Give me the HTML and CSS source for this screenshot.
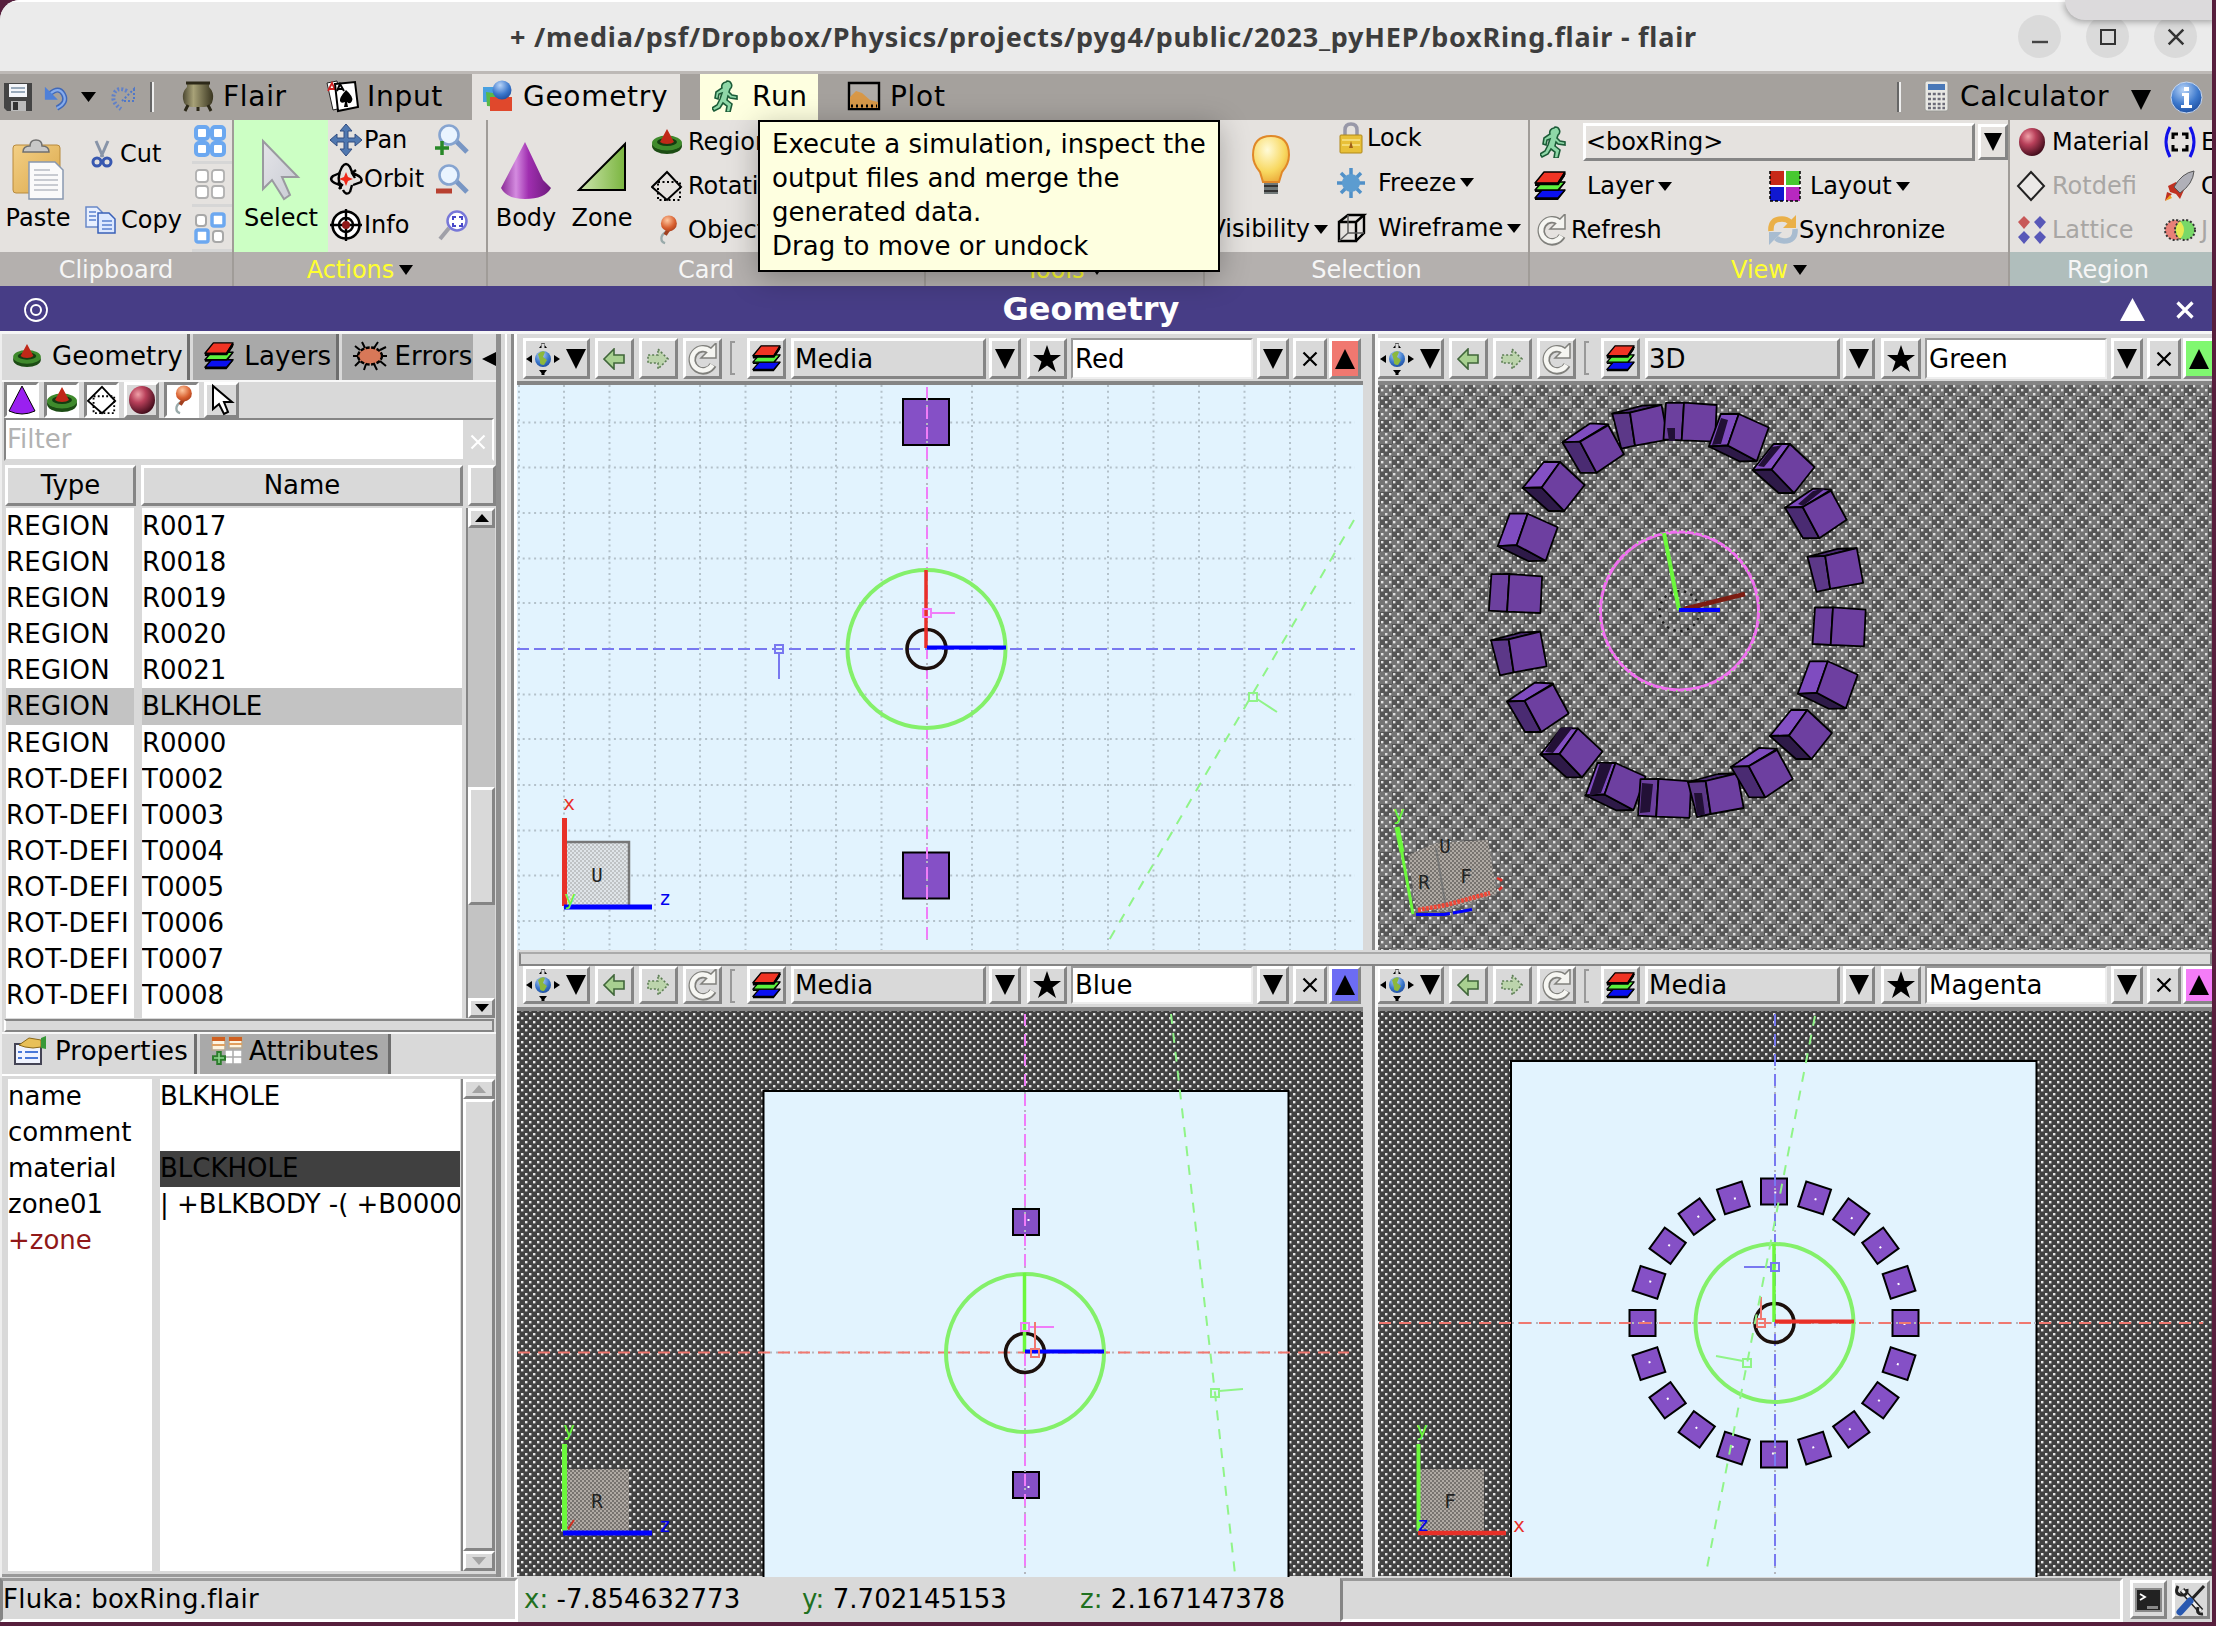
FILE: index.html
```html
<!DOCTYPE html>
<html lang="en">
<head>
<meta charset="utf-8">
<title>boxRing.flair - flair</title>
<link rel="stylesheet" href="styles.css">
</head>
<body>
<svg class="defs" width="0" height="0" aria-hidden="true">
  <defs>
    <linearGradient id="gPaste" x1="0" y1="0" x2="1" y2="1"><stop offset="0" stop-color="#f3cf85"/><stop offset="1" stop-color="#dba94c"/></linearGradient>
    <linearGradient id="gCone" x1="0" x2="1"><stop offset="0" stop-color="#8a2a96"/><stop offset=".3" stop-color="#d48be0"/><stop offset=".55" stop-color="#a02fb0"/><stop offset="1" stop-color="#6d1a7c"/></linearGradient>
    <linearGradient id="gZone" x1="0" x2="1"><stop offset="0" stop-color="#cfe6b0"/><stop offset="1" stop-color="#7ab53f"/></linearGradient>
    <linearGradient id="gArrow" x1="0" x2="1" y2="1"><stop offset="0" stop-color="#e4e4e8"/><stop offset="1" stop-color="#c9ccd4"/></linearGradient>
    <radialGradient id="gBall" cx=".35" cy=".3" r=".75"><stop offset="0" stop-color="#f0a0a8"/><stop offset=".4" stop-color="#b8405a"/><stop offset="1" stop-color="#3c0a18"/></radialGradient>
    <radialGradient id="gBulb" cx=".4" cy=".3" r=".8"><stop offset="0" stop-color="#fffbd8"/><stop offset=".6" stop-color="#f8d860"/><stop offset="1" stop-color="#e8a030"/></radialGradient>
    <radialGradient id="gBlue" cx=".4" cy=".25" r=".8"><stop offset="0" stop-color="#b8d4f8"/><stop offset=".6" stop-color="#3c78cc"/><stop offset="1" stop-color="#1c4c9c"/></radialGradient>
    <radialGradient id="gPin" cx=".4" cy=".3" r=".8"><stop offset="0" stop-color="#ffc8a0"/><stop offset=".6" stop-color="#d86030"/><stop offset="1" stop-color="#a03818"/></radialGradient>
    <linearGradient id="gPot" x1="0" x2="1"><stop offset="0" stop-color="#4c4832"/><stop offset=".35" stop-color="#a8a278"/><stop offset="1" stop-color="#38341f"/></linearGradient>

    <pattern id="dots" width="8" height="8" patternUnits="userSpaceOnUse"><rect width="8" height="8" fill="#424242"/><rect x="1" y="1" width="2.400" height="2.400" fill="#e8e8e8"/><rect x="5" y="5" width="2.400" height="2.400" fill="#e8e8e8"/></pattern>
    <pattern id="checks" width="24" height="24" patternUnits="userSpaceOnUse"><rect width="24" height="24" fill="#747474"/><rect width="12" height="12" fill="#565656"/><rect x="12" y="12" width="12" height="12" fill="#565656"/></pattern>
    <pattern id="specks" width="8" height="8" patternUnits="userSpaceOnUse"><rect x="1" y="1" width="2.400" height="2.400" fill="#e0e0e0"/><rect x="5" y="5" width="2.400" height="2.400" fill="#e0e0e0"/></pattern>
    <pattern id="mesh" width="4" height="4" patternUnits="userSpaceOnUse"><rect width="4" height="4" fill="#b0aaa4"/><rect width="2" height="2" fill="#77736f"/><rect x="2" y="2" width="2" height="2" fill="#77736f"/></pattern>
    <pattern id="meshLight" width="4" height="4" patternUnits="userSpaceOnUse"><rect width="4" height="4" fill="#dfe4e8"/><rect width="2" height="2" fill="#bfc2c4"/><rect x="2" y="2" width="2" height="2" fill="#bfc2c4"/></pattern>

    <symbol id="layers" viewBox="0 0 32 32"><path d="M1 28v2h23l7-9v-2l-7 9zM1 20v2h23l7-9v-2l-7 9zM1 13v3h23l7-10V3l-7 10z" fill="#000"/><g stroke="#000" stroke-width="1.500" stroke-linejoin="round"><path d="M8 20h23l-7 8H1z" fill="#0a10f0"/><path d="M8 12h23l-7 8H1z" fill="#5cf03c"/><path d="M10 2h21l-7 11H1z" fill="#f03424"/></g><path d="M1 14h23l7-11" fill="none" stroke="#000" stroke-width="2.400"/></symbol>
    <symbol id="runner" viewBox="0 0 28 32"><path d="M15 1a4.500 4.500 0 0 1 3 8l-1 3 3 3 5 1v3l-7-1-2-2-1 4 5 4-2 8h-4l1-6-4-3-3 5-6 3-2-3 5-3 3-6 2-6-3 1-1 5-3-1 1-6 6-4a4.500 4.500 0 0 1 4-6z" fill="#8fd8a8" stroke="#1c5c38" stroke-width="1.600"/></symbol>
    <symbol id="region" viewBox="0 0 32 26"><ellipse cx="16" cy="17" rx="15" ry="8" fill="#1c4c14"/><ellipse cx="16" cy="14" rx="15" ry="7.500" fill="#3f8a2c"/><ellipse cx="16" cy="13" rx="10" ry="4" fill="#143c10"/><path d="M16 0 23 13a8 4 0 0 1-14 0z" fill="#c02818"/></symbol>
    <symbol id="rotdef" viewBox="0 0 32 32"><path d="M16 2 30 17 16 30 1 17z" fill="none" stroke="#000" stroke-width="2"/><path d="M7 12h22v18H7z" fill="none" stroke="#000" stroke-width="2" stroke-dasharray="2 2.500"/></symbol>
    <symbol id="ball" viewBox="0 0 28 30"><ellipse cx="14" cy="15" rx="13" ry="14" fill="url(#gBall)"/></symbol>
    <symbol id="pin" viewBox="0 0 22 32"><path d="M10 18q-5 3-5 7 0 4 4 5" fill="none" stroke="#9aa" stroke-width="2.500"/><path d="M13 15 9 21" stroke="#a04020" stroke-width="4"/><circle cx="13" cy="9" r="8.500" fill="url(#gPin)"/></symbol>
    <symbol id="undo" viewBox="0 0 28 30"><path d="M7 12q10-9 15 0t-7 15" fill="none" stroke="#4068b8" stroke-width="5.500"/><path d="M7 12q10-9 15 0t-7 15" fill="none" stroke="#86acec" stroke-width="2.500"/><path d="M2 4v14h14z" fill="#4f80d8"/></symbol>
    <symbol id="refresh" viewBox="0 0 32 32"><path d="M25 9A11 11 0 1 0 27 22" fill="none" stroke="#80807c" stroke-width="7.500"/><path d="M30 0v15H15z" fill="#f4f4f0" stroke="#80807c" stroke-width="1.500"/><path d="M24 8A11 11 0 1 0 26.500 22" fill="none" stroke="#f6f6f2" stroke-width="4.500"/></symbol>
    <symbol id="globe" viewBox="0 0 34 34"><circle cx="17" cy="17" r="8" fill="url(#gBlue)"/><path d="M12 12q4-4 7-2l-2 5 4 3-3 5q-5 0-4-4z" fill="#8cb83c"/><path d="M13 6h8l-4-5zM13 28h8l-4 5zM6 13v8l-6-4zM28 13v8l6-4zM15.500 1h3v5h-3zM15.500 28h3v5h-3z" fill="#000"/></symbol>
    <symbol id="back" viewBox="0 0 22 22"><path d="M1 11 11 1v6h10v8H11v6z" fill="#a8d090" stroke="#40663a" stroke-width="1.600"/></symbol>
    <symbol id="fwd" viewBox="0 0 22 22"><path d="M21 11 11 1v6H1v8h10v6z" fill="#bcd4ac" stroke="#5c7c54" stroke-width="1.600" stroke-dasharray="2 2"/></symbol>
    <symbol id="star" viewBox="0 0 28 28"><path d="m14 0 3.500 10H28l-8.500 6.500L23 27l-9-6.500L5 27l3.500-10.500L0 10h10.500z"/></symbol>
    <symbol id="down" viewBox="0 0 20 20"><path d="M0 0h20L10 20z"/></symbol>
    <symbol id="up" viewBox="0 0 20 20"><path d="M0 20h20L10 0z"/></symbol>
    <symbol id="cross" viewBox="0 0 16 16"><path d="m1.500 1.500 13 13m0-13-13 13" stroke="currentColor" stroke-width="2.200"/></symbol>
    <symbol id="four" viewBox="0 0 32 32"><rect x="2" y="2" width="12" height="12" rx="3"/><rect x="18" y="2" width="12" height="12" rx="3"/><rect x="2" y="18" width="12" height="12" rx="3"/><rect x="18" y="18" width="12" height="12" rx="3"/></symbol>
    <symbol id="lens" viewBox="0 0 32 32"><path d="m20 17 11 11" stroke="#7896c4" stroke-width="5"/><circle cx="13" cy="11" r="9.500" fill="#eaf4ff" stroke="#86a4d0" stroke-width="2.600"/></symbol>

    <g id="cubeA" stroke="#000" stroke-width="1.800" stroke-linejoin="round"><path d="M-34-19.500-16-19.700-18.300 18-36.500 17z" fill="#6c409e"/><path d="M-16-19.700 16.700-17.300 15 19.300-18.300 18z" fill="#6d3fa0"/></g>
    <g id="cubeB" stroke="#000" stroke-width="1.800" stroke-linejoin="round"><path d="M-27-23h18L-20 8.500-39 9.500z" fill="#7f4cc0"/><path d="M-39 9.500-20 8.500 9 24-8 24.500z" fill="#2e1a48"/><path d="M-9-23 21-9.500 9 24-20 8.500z" fill="#6d3fa0"/></g>
    <g id="cubeC" stroke="#000" stroke-width="1.800" stroke-linejoin="round"><path d="M-19-24h16.300L-21 1.500-40 2z" fill="#8450c4"/><path d="M-40 2-21 1.500 1.500 25-14 25z" fill="#2e1a48"/><path d="M-2.700-24 22-1 1.500 25-21 1.500z" fill="#6d3fa0"/></g>
    <g id="cubeD" stroke="#000" stroke-width="1.800" stroke-linejoin="round"><path d="M-12-25 6-24-22.300-6.700-40-6z" fill="#7f4cc0"/><path d="M-40-6-22.300-6.700-5.700 24.500-22 24.500z" fill="#4a2b72"/><path d="M6-23 21.700 6-5.700 24.500-22.300-6.700z" fill="#6d3fa0"/></g>
    <g id="cubeE" stroke="#000" stroke-width="1.800" stroke-linejoin="round"><path d="M-36-12-6-20l19-.7-31.300 7.700z" fill="#4a2b72"/><path d="M-36-12l17.700-1L-13.300 20-27 23z" fill="#5c3888"/><path d="M-18.300-13 13.300-20.700 19.700 14-13.300 20z" fill="#6d3fa0"/></g>
    <rect id="box" x="-13" y="-13" width="26" height="26" fill="#8550c6" stroke="#000" stroke-width="2"/>
  </defs>
</svg>

<div class="window">
  <header class="titlebar">
    <h1>+ /media/psf/Dropbox/Physics/projects/pyg4/public/2023_pyHEP/boxRing.flair - flair</h1>
    <div class="winbtns">
      <span><svg width="18" height="18"><path d="M1 14h16" stroke="#444" stroke-width="2.400"/></svg></span>
      <span><svg width="18" height="18"><path d="M2 2h14v14H2z" fill="none" stroke="#333" stroke-width="2"/></svg></span>
      <span><svg width="18" height="18"><use href="#cross"/></svg></span>
    </div>
  </header>

  <nav class="menu">
    <svg class="m-save" width="30" height="30"><path d="M1 1h28v28H4l-3-3z" fill="#444"/><path d="M6 2h18v13H6z" fill="#f4f6fa"/><path d="M8 6h14M8 10h14" stroke="#9ab" stroke-width="2"/><path d="M8 19h15v10H8z" fill="#bbb"/><path d="M10 20h5v8h-5z" fill="#333"/></svg>
    <svg class="m-undo" width="26" height="28"><use href="#undo"/></svg>
    <svg class="m-drop" width="15" height="10" preserveAspectRatio="none"><path d="M0 0h15L7.500 10z"/></svg>
    <svg class="m-redo" width="27" height="28"><path d="M18 8Q8 3 5 11t7 15" fill="none" stroke="#6080c8" stroke-width="4" stroke-dasharray="2 2"/><path d="M25 6v12H13z" fill="none" stroke="#5078c8" stroke-width="2" stroke-dasharray="2 2"/></svg>
    <i class="vsep"></i>
    <a class="tab t-flair"><svg width="34" height="32"><path d="M6 3h22v4q5 5 4 12-1 8-9 8H11q-8 0-9-8Q1 12 6 7z" fill="url(#gPot)"/><path d="M5 3h24M7 25l-3 6M27 25l3 6M17 27v4" stroke="#2c2818" stroke-width="3"/></svg>Flair</a>
    <a class="tab t-input"><svg width="34" height="32"><path d="M2 3 12 1l5 27-9 2z" fill="#fff" stroke="#222"/><path d="m3 11 4-8 3 7M4 9h5" stroke="#d02020" stroke-width="1.800" fill="none"/><path d="m10 4 20-2 3 25-20 4z" fill="#fff" stroke="#000" stroke-width="2"/><path d="m12 11 3-7 4 7M13 9h5" stroke="#000" stroke-width="2" fill="none"/><path d="M21 10q8 7 6 11t-5 1l1 5h-4l1-5q-4 2-5-1t6-11z"/></svg>Input</a>
    <a class="tab t-geo"><svg width="32" height="32"><path d="M1 7h12v15H1z" fill="#48a0e0"/><path d="m4 12 14 2v13L5 26z" fill="#58b848"/><path d="M8 17h22v14H8z" fill="#e0482c"/><circle cx="20" cy="10" r="9.500" fill="url(#gBlue)"/></svg>Geometry</a>
    <a class="tab t-run"><svg width="28" height="32"><use href="#runner"/></svg>Run</a>
    <a class="tab t-plot"><svg width="34" height="30"><path d="M2 2h30v26H2z" fill="#b0aca8" stroke="#000" stroke-width="2.400"/><path d="M3 16 9 10l6 2 8 7 8 2v6H3z" fill="#d89848"/><path d="M4 25h26" stroke="#000" stroke-width="3" stroke-dasharray="2 3"/></svg>Plot</a>
    <i class="vsep v2"></i>
    <a class="tab t-calc"><svg width="25" height="32"><rect x="1" y="1" width="23" height="30" rx="2" fill="#e8e8e4" stroke="#9a9a96"/><path d="M4 4h17v6H4z" fill="#4878b8"/><path d="M4 14h17M4 19h17M4 24h17M4 28h17" stroke="#6b6b78" stroke-width="2.600" stroke-dasharray="3 1.800"/></svg>Calculator<svg class="calc-drop" width="20" height="20"><use href="#down"/></svg></a>
    <svg class="m-info" width="33" height="33"><circle cx="16.500" cy="16.500" r="15.500" fill="url(#gBlue)" stroke="#c8d8f0"/><path d="M14 6h5v4h-5zM12 12h7v12h3v3H11v-3h3v-9h-2z" fill="#fff"/></svg>
  </nav>

  <div class="ribbon">
    <section class="group g-clip">
      <div class="gbody">
        <div class="big b-paste"><svg width="52" height="60"><rect x="1" y="5" width="47" height="48" rx="3" fill="url(#gPaste)" stroke="#b88a3c"/><path d="M11 12q0-6 7-6 0-6 6-6t6 6q7 0 7 6z" fill="#c8c8c8" stroke="#707070" stroke-width="1.500"/><path d="M17 22h26l8 8v29H17z" fill="#fafafa" stroke="#8898b0" stroke-width="1.500"/><path d="M22 30h16M22 35h24M22 40h24M22 45h24M22 50h24" stroke="#b8bcc4" stroke-width="1.500"/></svg>Paste</div>
        <div class="col c-cut">
          <div class="row"><svg width="20" height="28"><path d="m4 1 7 16m5-16-7 16" stroke="#8894a8" stroke-width="3"/><circle cx="5" cy="22" r="4" fill="none" stroke="#3858b0" stroke-width="3"/><circle cx="15" cy="22" r="4" fill="none" stroke="#3858b0" stroke-width="3"/></svg><span>Cut</span></div>
          <div class="row"><svg width="32" height="28"><path d="M1 1h11l5 5v15H1z" fill="#e8f0ff" stroke="#6888c8" stroke-width="1.500"/><path d="M13 7h11l6 6v14H13z" fill="#dce8ff" stroke="#3860b8" stroke-width="1.500"/><path d="M4 6h7M4 10h7M4 14h7M17 15h10M17 19h10M17 23h10" stroke="#5880d0" stroke-width="1.600"/></svg><span>Copy</span></div>
        </div>
        <div class="col c-sel">
          <div class="row"><svg width="32" height="32" fill="#fff" stroke="#6ca8f0" stroke-width="4"><use href="#four"/></svg></div>
          <div class="row"><svg width="32" height="32" fill="#fff" stroke="#b0b0b0" stroke-width="1.800"><use href="#four"/></svg></div>
          <div class="row"><svg width="32" height="32" fill="#fff"><g stroke="#a8a8a8" stroke-width="2"><rect x="2" y="3" width="10" height="11" rx="3"/><rect x="19" y="19" width="10" height="11" rx="3"/></g><g stroke="#6ca8f0" stroke-width="3.500"><rect x="18" y="2" width="12" height="12" rx="2"/><rect x="2" y="18" width="12" height="12" rx="2"/></g></svg></div>
        </div>
      </div>
      <div class="glabel">Clipboard</div>
    </section>
    <section class="group g-act">
      <div class="gbody">
        <div class="big b-select"><svg width="40" height="60"><path d="M2 1v48l9-9 12 19 6-4-8-18h16z" fill="url(#gArrow)" stroke="#9a9aa0" stroke-width="2"/></svg>Select</div>
        <div class="col c-act">
          <div class="row"><svg width="32" height="32"><path d="M16 0 22 7h-4v7h7v-4l7 6-7 6v-4h-7v7h4l-6 7-6-7h4v-7H7v4l-7-6 7-6v4h7V7h-4z" fill="#5078b0" stroke="#304c80"/></svg><span>Pan</span></div>
          <div class="row"><svg width="32" height="32"><path d="M11 26Q6 14 12 4q4-6 8 0l2 5M20 29q-4 4-7-2M22 22l-2 7" fill="none" stroke="#000" stroke-width="2.400"/><path d="M10 22Q-3 18 3 13l7-3M22 10q12 4 9 9l-8 3M26 7l-4 3 3 5M9 26l3-4-4-3" fill="none" stroke="#000" stroke-width="2.400"/><path d="m16 9 2 5 5 2-5 2-2 5-2-5-5-2 5-2z" fill="#f02818"/></svg><span>Orbit</span></div>
          <div class="row"><svg width="32" height="32"><circle cx="16" cy="16" r="13.500" fill="#fff" stroke="#000" stroke-width="2.600"/><circle cx="16" cy="16" r="7" fill="none" stroke="#000" stroke-width="2.400"/><path d="M16 0v32M0 16h32" stroke="#000" stroke-width="2.400"/><circle cx="16" cy="16" r="4" fill="#901818"/></svg><span>Info</span></div>
        </div>
        <div class="col c-zoom">
          <div class="row"><svg width="34" height="32"><use href="#lens"/><path d="M7 17v14M0 24h14" stroke="#288828" stroke-width="3.500"/></svg></div>
          <div class="row"><svg width="34" height="32"><use href="#lens"/><path d="M1 27h16" stroke="#b84030" stroke-width="5"/></svg></div>
          <div class="row"><svg width="34" height="32"><path d="M14 19 5 30" stroke="#a0a0a8" stroke-width="4"/><circle cx="22" cy="12" r="9.500" fill="#fff" stroke="#7878d8" stroke-width="2.500"/><path d="M18 11V8h3m3 0h3v3m0 3v3h-3m-3 0h-3v-3" fill="none" stroke="#4848c8" stroke-width="2"/></svg></div>
        </div>
      </div>
      <div class="glabel hot">Actions<svg width="14" height="10"><path d="M0 0h14L7 10z"/></svg></div>
    </section>
    <section class="group g-card">
      <div class="gbody">
        <div class="big b-body"><svg width="52" height="58"><path d="M25 0 1 46q6 11 24 11 20 0 26-11l-8-8z" fill="url(#gCone)"/></svg>Body</div>
        <div class="big b-zone"><svg width="50" height="58"><path d="M48 2v46H2z" fill="url(#gZone)" stroke="#000" stroke-width="2"/></svg>Zone</div>
        <div class="col c-card">
          <div class="row"><svg width="32" height="26"><use href="#region"/></svg><span>Region</span></div>
          <div class="row"><svg width="32" height="32"><use href="#rotdef"/></svg><span>Rotation</span></div>
          <div class="row"><svg width="32" height="30"><use href="#pin"/></svg><span>Object</span></div>
        </div>
      </div>
      <div class="glabel">Card</div>
    </section>
    <section class="group g-tools">
      <div class="gbody"></div>
      <div class="glabel hot">Tools<svg width="14" height="10"><path d="M0 0h14L7 10z"/></svg></div>
    </section>
    <section class="group g-selection">
      <div class="gbody">
        <div class="big b-vis"><svg width="40" height="62"><path d="M20 1q18 0 18 19 0 9-7 17l-3 10H12L9 37Q2 29 2 20 2 1 20 1z" fill="url(#gBulb)" stroke="#e08828" stroke-width="2"/><path d="M13 48h14v11H13z" fill="#707878"/><path d="M13 51h14M13 56h14" stroke="#333" stroke-width="2"/></svg><span>Visibility<svg width="14" height="9"><path d="M0 0h14L7 9z"/></svg></span></div>
        <div class="col c-lock">
          <div class="row r-lock"><svg width="24" height="32"><path d="M6 15V8q0-6 6-6t6 6v7" fill="none" stroke="#9898a8" stroke-width="3.500"/><rect x="1" y="13" width="22" height="18" rx="1" fill="#e8c038" stroke="#b08818"/><path d="M3 18h18M3 23h18" stroke="#f8e488" stroke-width="1.500"/><path d="m12 19 2 7h-4z" fill="#a06018"/></svg><span>Lock</span></div>
          <div class="row"><svg width="30" height="32"><path d="M15 1v30M1 16h28M5 6l20 20M25 6 5 26" stroke="#5090c8" stroke-width="3.500"/><circle cx="15" cy="16" r="9" fill="#5c9cd0"/></svg><span>Freeze<svg width="14" height="9"><path d="M0 0h14L7 9z"/></svg></span></div>
          <div class="row"><svg width="30" height="30"><path d="M3 9h17v19H3zM3 9l9-7h16l-8 7m8-7v18l-8 8" fill="none" stroke="#000" stroke-width="2.400"/><path d="M12 2v18h16M12 20l-9 8" fill="none" stroke="#555" stroke-width="1.500"/></svg><span>Wireframe<svg width="14" height="9"><path d="M0 0h14L7 9z"/></svg></span></div>
        </div>
      </div>
      <div class="glabel">Selection</div>
    </section>
    <section class="group g-view">
      <div class="gbody">
        <div class="vrow"><svg width="28" height="32"><use href="#runner"/></svg><div class="combo raised">&lt;boxRing&gt;</div><div class="btn raised cdrop"><svg width="18" height="18"><use href="#down"/></svg></div></div>
        <div class="vrow pair">
          <div class="row"><svg width="34" height="32"><use href="#layers"/></svg><span>Layer<svg width="14" height="9"><path d="M0 0h14L7 9z"/></svg></span></div>
          <div class="row"><svg width="32" height="32"><path d="M1 1h14v14H1z" fill="#c82818"/><path d="M17 1h14v14H17z" fill="#48c830"/><path d="M1 17h14v14H1z" fill="#1018d0"/><path d="M17 17h14v14H17z" fill="#b828c0"/><path d="M1 1v30M31 1v30M1 31h30" stroke="#000" stroke-width="1.500" stroke-dasharray="3 2" fill="none"/><path d="M16 0v32M0 16h32" stroke="#fff" stroke-width="2"/></svg><span>Layout<svg width="14" height="9"><path d="M0 0h14L7 9z"/></svg></span></div>
        </div>
        <div class="vrow pair tight">
          <div class="row"><svg width="32" height="32"><use href="#refresh"/></svg><span>Refresh</span></div>
          <div class="row"><svg width="32" height="32"><path d="M4 17Q3 5 15 5q5 0 8 3" fill="none" stroke="#eab048" stroke-width="5.500"/><path d="M29 1v13H16z" fill="#eab048"/><path d="M28 15q1 12-11 12-5 0-8-3" fill="none" stroke="#a8bcd0" stroke-width="5.500"/><path d="M2 31V18h13z" fill="#a8bcd0"/></svg><span>Synchronize</span></div>
        </div>
      </div>
      <div class="glabel hot">View<svg width="14" height="10"><path d="M0 0h14L7 10z"/></svg></div>
    </section>
    <section class="group g-region">
      <div class="gbody">
        <div class="col c-mat">
          <div class="row"><svg width="28" height="30"><use href="#ball"/></svg><span>Material</span></div>
          <div class="row off"><svg width="28" height="30"><path d="M14 1 27 15 14 29 1 15z" fill="#ebe9e7" stroke="#222" stroke-width="2"/></svg><span>Rotdefi</span></div>
          <div class="row off"><svg width="30" height="30"><path d="m7 1 6 6-6 7-6-7z" fill="#c85858"/><path d="m23 1 6 6-6 7-6-7zM7 16l6 6-6 7-6-7zM23 16l6 6-6 7-6-7z" fill="#5858b8"/></svg><span>Lattice</span></div>
        </div>
        <div class="col c-mat2">
          <div class="row"><svg width="32" height="32"><path d="M6 1q-8 15 0 30M26 1q8 15 0 30" fill="none" stroke="#1010e8" stroke-width="3"/><path d="M9 13V8h5m4 0h5v5m0 6v5h-5m-4 0H9v-5" fill="none" stroke="#000" stroke-width="3"/></svg><span>E</span></div>
          <div class="row"><svg width="32" height="32"><path d="m8 24-7 7 2-9zM4 16l8-4 8 8-4 9-4-5-6-2z" fill="#c03020"/><path d="M30 1Q18 3 10 17l6 6Q29 14 30 1z" fill="#b0b0b8" stroke="#555"/><path d="m6 25-5 6 7-3z" fill="#f0a020"/></svg><span>C</span></div>
          <div class="row off"><svg width="32" height="28"><circle cx="11" cy="14" r="10" fill="#e88078" stroke="#333" stroke-dasharray="2 2" stroke-width="2"/><circle cx="21" cy="14" r="10" fill="#78d868" stroke="#333" stroke-dasharray="2 2" stroke-width="2"/><path d="M16 5q8 9 0 18-8-9 0-18z" fill="#e8e850"/></svg><span>J</span></div>
        </div>
      </div>
      <div class="glabel teal">Region</div>
    </section>
  </div>

  <div class="pagehead">
    <svg width="26" height="26"><ellipse cx="13" cy="13" rx="11" ry="11" fill="none" stroke="#fff" stroke-width="1.800"/><circle cx="13" cy="13" r="5" fill="none" stroke="#fff" stroke-width="2"/></svg>
    <h2>Geometry</h2>
    <svg class="ph-up" width="25" height="23" viewBox="0 0 25 23"><path d="M0 23h25L12.500 0z" fill="#fff"/></svg>
    <svg class="ph-x" width="20" height="20" viewBox="0 0 16 16"><path d="m2 2 12 12m0-12L2 14" stroke="#fff" stroke-width="2.600"/></svg>
  </div>

  <main class="work">
    <aside class="side">
      <div class="stabs">
        <a class="on w1"><svg width="32" height="24"><use href="#region"/></svg>Geometry</a>
        <a class="w2"><svg width="34" height="30"><use href="#layers"/></svg>Layers</a>
        <a class="w3"><svg width="34" height="30"><ellipse cx="17" cy="15" rx="12" ry="8.500" fill="#d87858" stroke="#000" stroke-width="2.400" stroke-dasharray="4 1.500"/><path d="M7 9 2 5M12 7 9 1M21 7l4-6M27 9l6-3M5 15H0M29 15h5M7 20l-5 5M13 23l-2 6M21 23l3 6M27 20l6 5" stroke="#000" stroke-width="2"/></svg>Errors</a>
        <span class="sarrow"><svg width="14" height="14"><path d="M14 0v14L0 7z"/></svg></span>
      </div>
      <div class="stools">
        <span class="tb sunk"><svg width="28" height="31"><path d="M14 1 27 26q-13 6-26 0z" fill="#9a20f0" stroke="#000"/></svg></span>
        <span class="tb sunk"><svg width="32" height="26"><use href="#region"/></svg></span>
        <span class="tb sunk"><svg width="30" height="30"><use href="#rotdef"/></svg></span>
        <span class="tb raised"><svg width="28" height="30"><use href="#ball"/></svg></span>
        <span class="tb sunk"><svg width="24" height="30"><use href="#pin"/></svg></span>
        <span class="tb raised"><svg width="24" height="32"><path d="M3 2v23l6-5 5 10 4-2-4-10h8z" fill="#fff" stroke="#000" stroke-width="2"/></svg></span>
      </div>
      <div class="filter"><span>Filter</span><i><svg width="16" height="16"><use href="#cross"/></svg></i></div>
      <div class="lhead"><span class="raised">Type</span><span class="raised">Name</span><span class="raised"></span></div>
      <div class="list">
        <div class="lcol types">
          <p>REGION</p><p>REGION</p><p>REGION</p><p>REGION</p><p>REGION</p><p class="cur">REGION</p><p>REGION</p><p>ROT-DEFI</p><p>ROT-DEFI</p><p>ROT-DEFI</p><p>ROT-DEFI</p><p>ROT-DEFI</p><p>ROT-DEFI</p><p>ROT-DEFI</p>
        </div>
        <div class="lcol">
          <p>R0017</p><p>R0018</p><p>R0019</p><p>R0020</p><p>R0021</p><p class="cur">BLKHOLE</p><p>R0000</p><p>T0002</p><p>T0003</p><p>T0004</p><p>T0005</p><p>T0006</p><p>T0007</p><p>T0008</p>
        </div>
        <div class="sbar"><span class="raised sb-btn"><svg width="14" height="8"><path d="M0 8h14L7 0z"/></svg></span><span class="trough"><span class="raised thumb"></span></span><span class="raised sb-btn"><svg width="14" height="8"><path d="M0 0h14L7 8z"/></svg></span></div>
      </div>
      <div class="hsash"></div>
      <div class="stabs low">
        <a class="on w4"><svg width="34" height="30"><path d="M2 8h26v20H2z" fill="#f0f4ff" stroke="#445" stroke-width="2"/><path d="M5 16h4m3 0h13M5 22h4m3 0h13" stroke="#4878d8" stroke-width="2"/><path d="m6 9 10-7 12 2v7l-8 1-8-1z" fill="#e8c058" stroke="#8a6818"/><path d="M28 2l5-2v13l-5-1z" fill="#389838"/></svg>Properties</a>
        <a class="w5"><svg width="32" height="30"><path d="M1 1h13v13H1zM18 1h13v11H18z" fill="#fdf4e0" stroke="#b8a890" stroke-width="1.500"/><path d="M1 1h13v4H1zM18 1h13v4H18z" fill="#d06020"/><path d="M1 9h13M18 8h13" stroke="#e0a060" stroke-width="2"/><path d="M14 14h17v14H14z" fill="#fff" stroke="#aaa" stroke-width="1.500"/><path d="M22 14v14M14 21h17" stroke="#aaa" stroke-width="1.500"/><path d="M8 15v14M1 22h14" stroke="#2c7c2c" stroke-width="5.500"/><path d="M8 17v10M3 22h10" stroke="#90d890" stroke-width="1.500"/></svg>Attributes</a>
      </div>
      <div class="props">
        <div class="pcol"><p>name</p><p>comment</p><p>material</p><p>zone01</p><p class="add">+zone</p></div>
        <div class="pcol"><p>BLKHOLE</p><p>&nbsp;</p><p class="mat">BLCKHOLE</p><p>| +BLKBODY -( +B0000</p></div>
        <div class="sbar dim"><span class="raised sb-btn"><svg width="14" height="8"><path d="M0 8h14L7 0z"/></svg></span><span class="trough"><span class="raised thumb"></span></span><span class="raised sb-btn"><svg width="14" height="8"><path d="M0 0h14L7 8z"/></svg></span></div>
      </div>
    </aside>
    <div class="vsash"></div>

    <div class="views">
      <section class="view">
        <div class="vbar">
          <span class="btn raised k1"><svg width="34" height="34"><use href="#globe"/></svg><svg width="20" height="20"><use href="#down"/></svg></span><span class="btn raised k2"><svg width="22" height="22"><use href="#back"/></svg></span><span class="btn raised k3"><svg width="22" height="22"><use href="#fwd"/></svg></span><span class="btn raised k4"><svg width="32" height="32"><use href="#refresh"/></svg></span><i class="k5"></i><span class="btn raised k6"><svg width="33" height="29"><use href="#layers"/></svg></span><span class="combo raised k7">Media</span><span class="btn raised k8"><svg width="20" height="20"><use href="#down"/></svg></span><span class="btn raised k9"><svg width="28" height="28"><use href="#star"/></svg></span><span class="entry k10">Red</span><span class="btn raised k11"><svg width="20" height="20"><use href="#down"/></svg></span><span class="btn raised k12"><svg width="16" height="16"><use href="#cross"/></svg></span><span class="btn raised k13 red"><svg width="20" height="20"><use href="#up"/></svg></span>
        </div>
        <svg class="canvas" viewBox="517 385 846 565">
          <rect x="517" y="385" width="846" height="565" fill="#e2f3fe"/>
          <path class="grid" d="M519 385v565M564 385v565M609.500 385v565M655 385v565M700 385v565M745.500 385v565M791 385v565M836 385v565M881.500 385v565M972 385v565M1017.500 385v565M1063 385v565M1108 385v565M1153.500 385v565M1199 385v565M1244.500 385v565M1290 385v565M1335 385v565M517 422.600h838M517 467.500h838M517 513h838M517 558.500h838M517 603h838M517 694.500h838M517 739h838M517 785h838M517 830.500h838M517 875.500h838M517 921h838"/>
          <rect x="903" y="399" width="46" height="46" fill="#8550c6" stroke="#000" stroke-width="2"/>
          <rect x="903" y="852.500" width="46" height="46" fill="#8550c6" stroke="#000" stroke-width="2"/>
          <path class="between" d="M927 387v553"/><path class="dash mag" d="M927 387v553"/>
          <path class="dash close blu" d="M517 649h838"/>
          <circle class="ring" cx="926.500" cy="649" r="79"/>
          <circle class="hub" cx="926.500" cy="649" r="19.500"/>
          <path d="M926 570v78" stroke="#e83028" stroke-width="3.500"/><path d="M927 647.500h79" stroke="#00f" stroke-width="4"/>
          <g class="mark mag"><path d="M923 609h8v8h-8zM931 613h24"/></g>
          <g class="mark blu"><path d="M775 645h8v8h-8zM779 653v26"/></g>
          <path class="far" d="M1354 520 1108 942"/>
          <g class="mark grn"><path d="M1249 693h8v8h-8zM1257 699l20 13"/></g>
          <path d="M565 842h64v65h-64z" fill="url(#meshLight)" stroke="#777" stroke-width="2.500"/>
          <path d="M564.500 818v88" stroke="#e83028" stroke-width="5"/><path d="M564 907h88" stroke="#00f" stroke-width="5"/>
          <text class="ax r" x="563" y="810">x</text><text class="ax b" x="659" y="905">z</text><text class="ax g" x="564" y="905">y</text><text class="face" x="597" y="882">U</text>
        </svg>
      </section>

      <section class="view right">
        <div class="vbar">
          <span class="btn raised k1"><svg width="34" height="34"><use href="#globe"/></svg><svg width="20" height="20"><use href="#down"/></svg></span><span class="btn raised k2"><svg width="22" height="22"><use href="#back"/></svg></span><span class="btn raised k3"><svg width="22" height="22"><use href="#fwd"/></svg></span><span class="btn raised k4"><svg width="32" height="32"><use href="#refresh"/></svg></span><i class="k5"></i><span class="btn raised k6"><svg width="33" height="29"><use href="#layers"/></svg></span><span class="combo raised k7">3D</span><span class="btn raised k8"><svg width="20" height="20"><use href="#down"/></svg></span><span class="btn raised k9"><svg width="28" height="28"><use href="#star"/></svg></span><span class="entry k10">Green</span><span class="btn raised k11"><svg width="20" height="20"><use href="#down"/></svg></span><span class="btn raised k12"><svg width="16" height="16"><use href="#cross"/></svg></span><span class="btn raised k13 green"><svg width="20" height="20"><use href="#up"/></svg></span>
        </div>
        <svg class="canvas" viewBox="1378 385 834 565">
          <rect x="1378" y="385" width="834" height="565" fill="url(#checks)"/>
          <rect x="1378" y="385" width="834" height="565" fill="url(#specks)"/>
          <use href="#cubeA" x="1525.400" y="593.700"/><use href="#cubeB" x="1536.700" y="536.700"/><use href="#cubeC" x="1562.700" y="486"/><use href="#cubeD" x="1602.300" y="448.300"/><use href="#cubeE" x="1648.300" y="425.700"/><use href="#cubeA" x="1700" y="422.300"/><use href="#cubeB" x="1747.800" y="437"/><use href="#cubeC" x="1792.600" y="468"/><use href="#cubeD" x="1825" y="513.700"/><use href="#cubeE" x="1843.500" y="568.800"/>
          <use href="#cubeE" x="1527" y="652.400"/><use href="#cubeD" x="1547" y="707.500"/><use href="#cubeC" x="1580.500" y="752.400"/><use href="#cubeB" x="1624.500" y="786"/><use href="#cubeA" x="1674.500" y="798.600"/><use href="#cubeE" x="1724" y="794"/><use href="#cubeD" x="1771" y="772.900"/><use href="#cubeC" x="1810" y="734"/><use href="#cubeB" x="1836.800" y="684.300"/><use href="#cubeA" x="1849" y="627"/>
          <g fill="#221036"><path d="M1667 428h8v13h-6zM1721 418l7 2-7 24-9 1zM1772 447l10-2-18 22-6-1zM1813 491l13-3-23 18-5-2zM1560 728l13-1-20 26-8-1zM1600 763l12 1-11 29-12 3zM1642 783l11 1-3 28-10 1zM1694 793h8l3 22h-8z"/></g>
          <circle cx="1679.500" cy="611" r="20" fill="none" stroke="#a0a0a0" stroke-width="3" opacity=".5"/>
          <circle cx="1679.500" cy="611" r="20" fill="none" stroke="#1c1c1c" stroke-width="2.500" stroke-dasharray="2.500 4.500"/>
          <circle cx="1679.500" cy="611" r="79" fill="none" stroke="#f070f0" stroke-width="3"/>
          <circle cx="1679.500" cy="611" r="80" fill="none" stroke="#84f06a" stroke-width="1.500" stroke-dasharray="1.500 7"/>
          <path d="M1684 609 1745 594" stroke="#7c1c12" stroke-width="4.500"/><path d="M1664 533 1679 610" stroke="#6cf83c" stroke-width="4"/><path d="M1679 610h41" stroke="#00f" stroke-width="4"/>
          <path d="m1408 855 28-12 52-3 9 54-51 17-30-2z" fill="url(#mesh)"/><path d="m1436 848 10 60" stroke="#777" stroke-width="2"/>
          <path d="m1418 910 28-5 44-12" fill="none" stroke="#f04838" stroke-width="4.500" stroke-dasharray="3 1"/><path d="M1416 914.500h28l28-5" fill="none" stroke="#00f" stroke-width="3" stroke-dasharray="34 3"/>
          <path d="M1397 828l4 20 12 66" fill="none" stroke="#6cf83c" stroke-width="3"/><path d="M1397 827l5 25" stroke="#6cf83c" stroke-width="5"/>
          <path d="m1497 878 4 2m-2 10 3-3m-2-6 2-2" stroke="#e83028" stroke-width="2.500"/>
          <text class="ax g" x="1393" y="820">y</text><text class="face" x="1445" y="853">U</text><text class="face" x="1424" y="889">R</text><text class="face" x="1466" y="883">F</text>
        </svg>
      </section>

      <div class="vgap"></div>

      <section class="view second">
        <div class="vbar">
          <span class="btn raised k1"><svg width="34" height="34"><use href="#globe"/></svg><svg width="20" height="20"><use href="#down"/></svg></span><span class="btn raised k2"><svg width="22" height="22"><use href="#back"/></svg></span><span class="btn raised k3"><svg width="22" height="22"><use href="#fwd"/></svg></span><span class="btn raised k4"><svg width="32" height="32"><use href="#refresh"/></svg></span><i class="k5"></i><span class="btn raised k6"><svg width="33" height="29"><use href="#layers"/></svg></span><span class="combo raised k7">Media</span><span class="btn raised k8"><svg width="20" height="20"><use href="#down"/></svg></span><span class="btn raised k9"><svg width="28" height="28"><use href="#star"/></svg></span><span class="entry k10">Blue</span><span class="btn raised k11"><svg width="20" height="20"><use href="#down"/></svg></span><span class="btn raised k12"><svg width="16" height="16"><use href="#cross"/></svg></span><span class="btn raised k13 blue"><svg width="20" height="20"><use href="#up"/></svg></span>
        </div>
        <svg class="canvas" viewBox="517 1011 846 565">
          <rect x="517" y="1011" width="846" height="565" fill="url(#dots)"/>
          <path d="M763.500 1580V1091H1288.500v489" fill="#e2f3fe" stroke="#000" stroke-width="2"/>
          <use href="#box" x="1026" y="1222"/><use href="#box" x="1026" y="1485"/>
          <path class="between" d="M1025 1092v482M764 1352.600h524"/>
          <path class="dash mag" d="M1025 1014v560"/><path class="dash rd" d="M518 1352.600h831"/>
          <circle class="ring" cx="1025" cy="1353" r="79"/><circle class="hub" cx="1025" cy="1353" r="19.500"/>
          <path d="M1024.500 1273v79" stroke="#6cf83c" stroke-width="3.500"/><path d="M1025 1351.500h79" stroke="#00f" stroke-width="4"/>
          <g class="mark mag"><path d="M1021 1323h8v8h-8zM1029 1327h25"/></g>
          <g class="mark rd"><path d="M1031 1349h8v8h-8zM1035 1349v-27"/></g>
          <path class="far" d="M1171 1014 1215 1393 1235 1574"/>
          <g class="mark grn"><path d="M1211 1389h8v8h-8zM1219 1391l24-2"/></g>
          <path d="M1027.500 1219h2v2h-2zM1027.500 1486h2v2h-2z" fill="#fff"/>
          <rect x="565" y="1469" width="64" height="62" fill="url(#mesh)"/>
          <path d="m568 1529 6-9" stroke="#d03020" stroke-width="2"/>
          <path d="M564.500 1444v87" stroke="#6cf83c" stroke-width="5"/><path d="M563 1533h89" stroke="#00f" stroke-width="5"/>
          <text class="ax g" x="563" y="1436">y</text><text class="ax b" x="659" y="1532">z</text><text class="face" x="597" y="1508">R</text>
        </svg>
      </section>

      <section class="view right second">
        <div class="vbar">
          <span class="btn raised k1"><svg width="34" height="34"><use href="#globe"/></svg><svg width="20" height="20"><use href="#down"/></svg></span><span class="btn raised k2"><svg width="22" height="22"><use href="#back"/></svg></span><span class="btn raised k3"><svg width="22" height="22"><use href="#fwd"/></svg></span><span class="btn raised k4"><svg width="32" height="32"><use href="#refresh"/></svg></span><i class="k5"></i><span class="btn raised k6"><svg width="33" height="29"><use href="#layers"/></svg></span><span class="combo raised k7">Media</span><span class="btn raised k8"><svg width="20" height="20"><use href="#down"/></svg></span><span class="btn raised k9"><svg width="28" height="28"><use href="#star"/></svg></span><span class="entry k10">Magenta</span><span class="btn raised k11"><svg width="20" height="20"><use href="#down"/></svg></span><span class="btn raised k12"><svg width="16" height="16"><use href="#cross"/></svg></span><span class="btn raised k13 magenta"><svg width="20" height="20"><use href="#up"/></svg></span>
        </div>
        <svg class="canvas" viewBox="1378 1011 834 565">
          <rect x="1378" y="1011" width="834" height="565" fill="url(#dots)"/>
          <path d="M1511 1580V1061H2036.500v519" fill="#e2f3fe" stroke="#000" stroke-width="2"/>
          <g transform="translate(1774 1323)">
            <use href="#box" transform="rotate(0) translate(0 -131.500)"/><use href="#box" transform="rotate(18) translate(0 -131.500)"/><use href="#box" transform="rotate(36) translate(0 -131.500)"/><use href="#box" transform="rotate(54) translate(0 -131.500)"/><use href="#box" transform="rotate(72) translate(0 -131.500)"/><use href="#box" transform="rotate(90) translate(0 -131.500)"/><use href="#box" transform="rotate(108) translate(0 -131.500)"/><use href="#box" transform="rotate(126) translate(0 -131.500)"/><use href="#box" transform="rotate(144) translate(0 -131.500)"/><use href="#box" transform="rotate(162) translate(0 -131.500)"/><use href="#box" transform="rotate(180) translate(0 -131.500)"/><use href="#box" transform="rotate(198) translate(0 -131.500)"/><use href="#box" transform="rotate(216) translate(0 -131.500)"/><use href="#box" transform="rotate(234) translate(0 -131.500)"/><use href="#box" transform="rotate(252) translate(0 -131.500)"/><use href="#box" transform="rotate(270) translate(0 -131.500)"/><use href="#box" transform="rotate(288) translate(0 -131.500)"/><use href="#box" transform="rotate(306) translate(0 -131.500)"/><use href="#box" transform="rotate(324) translate(0 -131.500)"/><use href="#box" transform="rotate(342) translate(0 -131.500)"/>
            <circle r="130.500" fill="none" stroke="#fff" stroke-width="2" stroke-dasharray="2 39"/>
          </g>
          <path class="between" d="M1775 1062v512M1512 1323h524"/>
          <path class="dash blu" d="M1775 1014v560"/><path class="dash rd" d="M1379 1323h824"/>
          <circle class="ring" cx="1774.500" cy="1323" r="79"/><circle class="hub" cx="1774.500" cy="1323" r="19.500"/>
          <path d="M1774 1244v78" stroke="#6cf83c" stroke-width="3.500"/><path d="M1775 1321.500h79" stroke="#e83028" stroke-width="4"/>
          <g class="mark blu"><path d="M1771 1263h8v8h-8zM1771 1267h-27"/></g>
          <g class="mark rd"><path d="M1757 1319h8v8h-8zM1761 1319v-22"/></g>
          <path class="far" d="M1815 1016 1706 1573"/>
          <g class="mark grn"><path d="M1743 1359h8v8h-8zM1743 1361l-27-5"/></g>
          <rect x="1419" y="1469" width="65" height="63" fill="url(#mesh)"/>
          <path d="M1418.500 1444v87" stroke="#6cf83c" stroke-width="4"/><path d="M1418 1533h88" stroke="#e83028" stroke-width="4.500"/>
          <text class="ax g" x="1416" y="1436">y</text><text class="ax r" x="1513" y="1532">x</text><text class="ax b" x="1417" y="1531">z</text><text class="face" x="1450" y="1508">F</text>
        </svg>
      </section>
    </div>
  </main>

  <footer class="status">
    <div class="st1">Fluka: boxRing.flair</div>
    <div class="coords"><span><b>x:</b> -7.854632773</span><span><b>y:</b> 7.702145153</span><span><b>z:</b> 2.167147378</span></div>
    <div class="st2"></div>
    <span class="btn raised s1"><svg width="27" height="24"><rect x="1" y="1" width="25" height="22" fill="#222" stroke="#888" stroke-width="2"/><path d="m5 6 5 3-5 3" fill="none" stroke="#fff" stroke-width="1.800"/><path d="M12 18h11v3H12z" fill="#888"/></svg></span>
    <span class="btn raised s2"><svg width="32" height="32"><path d="M7 6 26 27" stroke="#222" stroke-width="6"/><path d="M7 6 26 27" stroke="#eee" stroke-width="3"/><path d="M3 2q-4 8 3 9t6-6M23 23q-2 8 5 7" fill="none" stroke="#222" stroke-width="3"/><path d="M29 2 15 17" stroke="#222" stroke-width="3"/><path d="M15 17 5 28" stroke="#2858b0" stroke-width="7" stroke-linecap="round"/></svg></span>
  </footer>

  <div class="tooltip">Execute a simulation, inspect the<br>output files and merge the<br>generated data.<br>Drag to move or undock</div>
  <div class="corner"></div>
</div>
</body>
</html>
```
FILE: styles.css
```css
* { box-sizing: border-box; }
body { margin: 0; width: 2216px; height: 1626px; overflow: hidden; background: #571f3d; font: 26px "DejaVu Sans", sans-serif; color: #000; }
svg { display: block; flex: none; overflow: visible; }
.defs { position: absolute; }
p, h1, h2 { margin: 0; font-weight: normal; }
.window { position: relative; width: 2212px; height: 1622px; display: flex; flex-direction: column; overflow: hidden; border-radius: 20px 0 0 0; background: #d9d9d9; }
.raised { border: 3px solid; border-color: #fff #858585 #858585 #fff; background: #d9d9d9; }
.sunk { border: 3px solid; border-color: #858585 #fff #fff #858585; background: #fff; }
.btn { display: flex; align-items: center; justify-content: center; }

/* title bar */
.titlebar { height: 74px; flex: none; display: flex; align-items: center; justify-content: flex-end; background: #ebebeb; border-top: 2px solid #fff; border-bottom: 3px solid #bdb9b6; }
.titlebar h1 { width: 1188px; margin-right: 320px; font: bold 27px/40px "Noto Sans", sans-serif; letter-spacing: .78px; color: #3d3d3d; white-space: nowrap; }
.winbtns { display: flex; gap: 25px; padding-right: 15px; }
.winbtns span { width: 43px; height: 43px; border-radius: 50%; background: #dadada; display: flex; align-items: center; justify-content: center; color: #333; }

/* main tabs */
.menu { height: 46px; flex: none; display: flex; align-items: center; background: #a5a19d; font-size: 28px; letter-spacing: .7px; }
.m-save { margin-left: 3px; }
.m-undo { margin-left: 10px; }
.m-drop { margin-left: 12px; }
.m-redo { margin-left: 13px; }
.vsep { width: 4px; height: 30px; margin-left: 14px; border-left: 2px solid #666; border-right: 2px solid #eee; }
.tab { height: 46px; display: flex; align-items: center; white-space: nowrap; padding-bottom: 2px; }
.t-flair { margin-left: 27px; width: 144px; gap: 8px; }
.t-input { width: 147px; gap: 8px; }
.t-geo { width: 208px; padding-left: 10px; gap: 9px; background: #e5e2df; }
.t-run { width: 118px; margin-left: 20px; padding-left: 12px; gap: 12px; background: #feffe0; }
.t-plot { margin-left: 29px; gap: 9px; }
.v2 { margin-left: auto; margin-right: 23px; }
.t-calc { width: 246px; gap: 11px; }
.calc-drop { margin-left: 11px; margin-top: 8px; }
.m-info { margin-right: 9px; }

/* ribbon */
.ribbon { display: flex; height: 166px; flex: none; background: #e5e2df; font-size: 24px; }
.group { display: flex; flex-direction: column; flex: none; border-right: 2px solid #a09c98; overflow: hidden; }
.gbody { height: 132px; display: flex; }
.glabel { height: 34px; line-height: 34px; padding-top: 2px; display: flex; justify-content: center; align-items: center; gap: 5px; background: #b4b0ae; color: #f6f6f6; }
.hot { color: #ffff30; }
.teal { background: #b0bebc; padding-right: 6px; }
.g-clip { width: 234px; } .g-act { width: 254px; } .g-card { width: 438px; } .g-tools { width: 279px; } .g-selection { width: 325px; } .g-view { width: 480px; } .g-region { width: 202px; border: 0; }
.big { display: flex; flex-direction: column; align-items: center; justify-content: flex-end; padding-bottom: 20px; line-height: 28px; flex: none; }
.big > svg { margin-bottom: 4px; }
.col { display: grid; flex: none; grid-template-rows: 44px 43px 45px; }
.row { display: flex; align-items: center; white-space: nowrap; gap: 6px; }
.row > span, .big > span { display: flex; align-items: center; gap: 4px; }
.b-paste { width: 76px; }
.c-cut { width: 116px; grid-template-rows: 67px 65px; }
.c-cut .row { padding-left: 9px; gap: 4px; }
.c-cut .row:first-child { padding-left: 16px; gap: 8px; }
.c-sel { width: 40px; }
.c-sel .row { padding-left: 2px; border-bottom: 3px solid #d6d6d6; }
.b-select { width: 94px; background: #ccffc4; }
.c-act { width: 107px; grid-template-rows: 39px 40px 52px; padding-left: 2px; }
.c-act .row { gap: 2px; }
.c-zoom { width: 40px; grid-template-rows: 40px 39px 52px; }
.b-body { width: 76px; } .b-zone { width: 76px; }
.c-card { padding-left: 11px; }
.c-card .row { gap: 5px; }
.b-vis { width: 123px; padding-bottom: 9px; white-space: nowrap; }
.b-vis > svg { margin: 0 0 18px 9px; }
.b-vis > span { align-self: flex-end; }
.c-lock { padding-left: 8px; grid-template-rows: 35px 55px 36px; }
.c-lock .row { gap: 12px; }
.c-lock .r-lock { padding-left: 3px; gap: 4px; }
.g-view .gbody { flex-direction: column; }
.vrow { height: 44px; display: flex; align-items: center; padding-left: 10px; }
.combo { display: flex; align-items: center; padding-left: 1px; }
.vrow .combo { width: 392px; height: 38px; margin-left: 15px; padding-left: 0; background: #e5e2df; }
.cdrop { width: 30px; height: 36px; margin-left: 3px; background: #e5e2df; }
.pair { display: grid; grid-template-columns: 236px 1fr; padding-left: 3px; }
.pair .row:first-child { gap: 20px; }
.pair .row + .row { gap: 9px; }
.tight { padding-left: 5px; grid-template-columns: 232px 1fr; }
.tight .row:first-child { gap: 4px; }
.tight .row + .row { gap: 0; }
.c-mat { width: 154px; padding-left: 7px; }
.c-mat .row > svg { width: 30px; }
.off { color: #a8a6a4; }
.c-mat .row, .c-mat2 .row { gap: 5px; }

/* page header */
.pagehead { height: 45px; flex: none; display: flex; align-items: center; padding: 2px 17px 0 23px; background: #473d86; color: #fff; }
.pagehead h2 { flex: 1; text-align: center; padding: 0 0 2px 13px; font-weight: bold; font-size: 32px; line-height: 38px; }
.ph-up { margin-right: 30px; }

/* work area */
.work { height: 1246px; flex: none; display: flex; border-top: 3px solid #f6f6f6; }
.side { width: 501px; flex: none; display: flex; flex-direction: column; border-right: 5px solid #8f8f8f; border-left: 2px solid #eee; }
.stabs { height: 46px; display: flex; align-items: center; letter-spacing: .15px; }
.stabs a { height: 46px; padding-bottom: 2px; display: flex; align-items: center; gap: 9px; background: #a9a9a9; border-right: 3px solid #6e6e6e; margin-right: 3px; }
.stabs a.on { background: #d9d9d9; }
.stabs .w1 { width: 192px; padding-left: 9px; } .stabs .w2 { width: 148px; padding-left: 9px; gap: 8px; } .stabs .w3 { width: 134px; padding-left: 11px; margin-right: 0; border: 0; gap: 8px; }
.sarrow { padding: 4px 0 0 9px; }
.stools { height: 38px; display: flex; gap: 5px; padding: 0 0 0 2px; border-top: 2px solid #f8f8f8; }
.tb { width: 35px; height: 36px; display: flex; align-items: center; justify-content: center; }
.filter { height: 43px; margin: 0 2px; display: flex; background: #fff; border: 2px solid; border-color: #858585 #fff #d9d9d9 #858585; color: #b2b2b2; line-height: 38px; }
.filter span { flex: 1; padding-left: 1px; }
.filter i { width: 29px; background: #d9d9d9; color: #fff; display: flex; align-items: center; justify-content: center; padding-top: 4px; }
.lhead { height: 47px; padding: 4px 0 2px 3px; display: grid; grid-template-columns: 131px 322px 28px; gap: 5px; text-align: center; line-height: 35px; }
.list { height: 510px; padding-left: 4px; display: grid; grid-template-columns: 128px 320px 27px; column-gap: 8px; }
.list .sbar { margin-left: -4px; margin-right: 2px; }
.lcol { background: #fff; overflow: hidden; }
.lcol p { height: 36.100px; line-height: 36.100px; padding-left: 0; white-space: nowrap; }
.types { letter-spacing: .3px; }
.cur { background: #c3c3c3; }
.sbar { display: flex; flex-direction: column; border-left: 2px solid #858585; }
.sb-btn { height: 20px; display: flex; align-items: center; justify-content: center; }
.trough { flex: 1; background: #c3c3c3; display: flex; flex-direction: column; }
.thumb { height: 118px; margin-top: 259px; }
.hsash { height: 13px; margin: 1px 2px 0 2px; border: 2px solid; border-color: #858585 #858585 #858585 #fff; }
.low { height: 42px; border-top: 2px solid #f8f8f8; }
.low a { height: 40px; padding-bottom: 7px; }
.low .w4 { width: 195px; padding-left: 11px; gap: 8px; } .low .w5 { width: 191px; padding-left: 11px; gap: 6px; }
.props { flex: 1; padding: 3px 0 3px 6px; display: grid; grid-template-columns: 144px 300px 29px; column-gap: 8px; border-top: 2px solid #fff; border-bottom: 3px solid #999; }
.props .sbar { margin-left: -7px; margin-right: 2px; }
.pcol { background: #fff; overflow: hidden; }
.pcol p { height: 36px; line-height: 34px; white-space: nowrap; }
.add { color: #901818; }
.mat { background: #404040; }
.dim svg { fill: #a3a3a3; }
.dim .thumb { flex: 1; height: auto; margin: 0; }
.vsash { width: 16px; flex: none; border-left: 4px solid #d9d9d9; border-right: 3px solid #fff; background: #d9d9d9; box-shadow: inset 2px 0 0 #fff, inset -3px 0 0 #8a8a8a; }

/* view grid */
.views { flex: 1; display: grid; grid-template-columns: 846px 834px; column-gap: 15px; grid-template-rows: 616px 16px 611px; }
.vgap { grid-column: 1 / -1; margin: 2px 0 0 2px; border: 2px solid #858585; border-top-color: #aaa; }
.view { display: flex; flex-direction: column; overflow: hidden; border: 0; }
.view.right { box-shadow: -3px 0 0 #f8f8f8, -6px 0 0 #8a8a8a; }
.vbar { height: 51px; flex: none; width: 854px; padding: 4px 0 4px 6px; display: flex; border-bottom: 4px solid #858585; }
.right .vbar { margin-left: -7px; }
.second .vbar { height: 45px; padding: 0 0 1px 6px; }
.canvas { width: 100%; height: 565px; }
.view .raised, .view .entry { height: 41px; flex: none; }
.second .raised, .second .entry { height: 38px; }
.k1 { width: 67px; gap: 6px; margin-right: 5px; padding-right: 2px; }
.k2, .k3, .k4 { width: 39px; margin-right: 5px; padding-right: 2px; }
.k5 { width: 5px; height: 34px; align-self: center; border: 2px solid #999; border-right: 0; margin: 0 12px 0 3px; }
.k6 { width: 39px; margin-right: 5px; }
.k7 { width: 195px; margin-right: 3px; }
.k8 { width: 32px; margin-right: 6px; }
.k9 { width: 40px; margin-right: 4px; }
.entry { width: 182px; margin-right: 4px; background: #fff; border: 2px solid; border-color: #999 #eee #eee #999; display: flex; align-items: center; padding-left: 2px; }
.k11 { width: 32px; margin-right: 4px; }
.k12 { width: 34px; margin-right: 2px; }
.k13 { width: 32px; }
.view .red { background: #f07870; } .view .green { background: #80f870; } .view .blue { background: #6c6cf4; } .view .magenta { background: #f47cf8; }

/* drawings */
.grid { stroke: #b3c1ca; stroke-width: 2; stroke-dasharray: 2 3.700; fill: none; }
.dash { stroke-width: 2; stroke-dasharray: 12 8; fill: none; }
.close { stroke-dasharray: 12 5; }
.between { fill: none; stroke: #b4b8c0; stroke-width: 2; stroke-dasharray: 2 4; }
.mag { stroke: #f07cf8; } .blu { stroke: #7878f0; } .rd { stroke: #f07870; } .grn { stroke: #90f488; }
.ring { fill: none; stroke: #84f06a; stroke-width: 4; }
.hub { fill: none; stroke: #1c100c; stroke-width: 3.600; }
.mark { fill: none; stroke-width: 2; }
.far { fill: none; stroke: #90f488; stroke-width: 2; stroke-dasharray: 10 9; }
.ax { font: 20px "DejaVu Sans Mono", monospace; }
.face { font: 19px "DejaVu Sans Mono", monospace; text-anchor: middle; fill: #222; }
.r { fill: #e83028; } .g { fill: #6cf83c; } .b { fill: #0000f0; }

/* status bar */
.status { flex: 1; display: flex; align-items: center; line-height: 36px; }
.st1 { width: 518px; height: 44px; padding-left: 0; letter-spacing: .3px; border: 3px solid; border-color: #999 #fff #fff #858585; }
.coords { width: 822px; display: flex; padding: 0 0 2px 6px; letter-spacing: .05px; }
.coords span { flex: none; width: 276px; white-space: nowrap; }
.coords span + span { margin-left: 2px; }
.coords b { font-weight: normal; color: #207020; }
.st2 { width: 783px; height: 44px; margin-right: 7px; border: 3px solid; border-color: #999 #fff #fff #858585; }
.s1 { width: 37px; height: 39px; margin-right: 5px; } .s2 { width: 38px; height: 39px; }

/* overlays */
.tooltip { position: absolute; left: 758px; top: 120px; width: 462px; height: 152px; padding: 5px 12px; border: 2px solid #000; background: #feffe0; line-height: 34px; white-space: nowrap; box-shadow: 0 6px 28px rgba(0,0,0,.28); }
.corner { position: absolute; right: -4px; top: 0; width: 151px; height: 20px; border-radius: 0 0 0 26px; background: #dcdadc; box-shadow: -1px 2px 6px rgba(0,0,0,.3); }
```
